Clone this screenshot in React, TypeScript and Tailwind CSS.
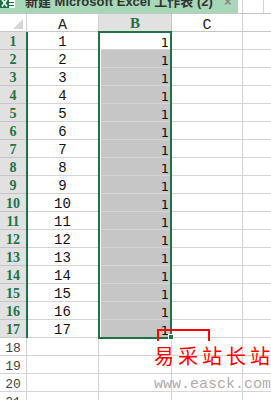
import React from 'react';

const rows = Array.from({ length: 21 }, (_, i) => i + 1);

const mono = { fontFamily: '"Liberation Mono", monospace' };
const serif = { fontFamily: '"Liberation Serif", serif' };

const ExcelIcon: React.FC = () => (
  <svg width="16" height="10" viewBox="0 0 16 10" className="shrink-0">
    <rect x="7" y="0" width="8" height="10" fill="#ffffff" />
    <rect x="9" y="1" width="5" height="1" fill="#217346" />
    <rect x="9" y="4" width="5" height="1" fill="#217346" />
    <rect x="9" y="7" width="5" height="1" fill="#217346" />
    <rect x="0" y="0" width="9" height="10" fill="#1e7145" />
    <path d="M2 1.5 L7 8.5 M7 1.5 L2 8.5" stroke="#ffffff" strokeWidth="1.6" />
  </svg>
);

const App: React.FC = () => {
  return (
    <div className="relative w-[271px] h-[400px] overflow-hidden bg-white">
      {/* title tab */}
      <div className="flex h-[14px] border-b border-[#c6c6c6]">
        <div className="w-[237px] h-[13px] bg-[#a6d8b8] overflow-hidden">
          <div className="flex items-start gap-[9px] -mt-[2px]">
            <ExcelIcon />
            <div
              className="-mt-[3px] text-[13px] leading-[13px] font-bold text-[#333] whitespace-nowrap"
              style={{ fontFamily: '"Liberation Sans", "Noto Sans CJK SC", sans-serif' }}
            >
              新建 Microsoft Excel 工作表 (2) <span className="text-[#666] text-[11px]">ˇ</span>
              <span className="ml-[4px] text-[#888]">×</span>
            </div>
          </div>
        </div>
        <div className="w-[5px] border-l border-[#c6c6c6]" />
        <div className="flex-1 border-l border-[#d4d4d4]" />
        <div className="w-[8px] border-l border-[#d4d4d4]" />
      </div>

      {/* column headers */}
      <div className="flex h-[18px] border-b border-[#c6c6c6]">
        <div className="relative w-[27px] border-r border-[#d4d4d4]">
          <div className="absolute right-[3px] bottom-[2px] w-0 h-0 border-l-[10px] border-l-transparent border-b-[10px] border-b-[#d6d6d6]" />
        </div>
        <div className="w-[72px] border-r border-[#d4d4d4] flex items-start justify-center pt-[4px] text-[15px] leading-[15px] text-[#222]" style={mono}>
          A
        </div>
        <div className="w-[73px] bg-[#e1e1e1] border-r border-[#c6c6c6] flex items-start justify-center pt-[2px] text-[15px] leading-[15px] font-bold text-[#217346]" style={serif}>
          B
        </div>
        <div className="w-[71px] border-r border-[#d4d4d4] flex items-start justify-center pt-[4px] text-[15px] leading-[15px] text-[#222]" style={mono}>
          C
        </div>
        <div className="flex-1" />
      </div>

      {/* rows */}
      {rows.map((r) => {
        const sel = r <= 17;
        return (
          <div key={r} className="flex h-[18px]">
            {sel ? (
              <div className="w-[27px] bg-[#e1e1e1] border-b border-[#c6c6c6] flex items-start justify-center pt-[2px] pr-[1px] text-[14px] leading-[15px] font-bold text-[#217346]" style={serif}>
                {r}
              </div>
            ) : (
              <div className="w-[27px] border-b border-r border-[#d4d4d4] flex items-start justify-center pt-[3px] text-[13px] leading-[15px] text-[#444]" style={mono}>
                {r}
              </div>
            )}
            <div className="w-[72px] border-b border-r border-[#d4d4d4] flex items-start justify-center pt-[3px] text-[14px] leading-[15px] text-[#111]" style={mono}>
              {sel ? r : ''}
            </div>
            {sel ? (
              <div className={`w-[73px] border-r border-[#d4d4d4] ${r === 1 ? 'bg-white border-b border-[#d4d4d4]' : 'bg-[#c6c6c6] border-b border-[#a6a6a6]'}`}>
                <div
                  className="h-full flex items-start justify-end pt-[3px] pr-[2px] text-[13px] leading-[15px] text-[#111]"
                  style={{ fontFamily: '"DejaVu Sans", sans-serif' }}
                >
                  1
                </div>
              </div>
            ) : (
              <div className="w-[73px] border-b border-r border-[#d4d4d4]" />
            )}
            <div className="w-[71px] border-b border-r border-[#d4d4d4]" />
            <div className="flex-1 border-b border-[#d4d4d4]" />
          </div>
        );
      })}

      {/* selection overlay */}
      <div className="absolute left-[26px] top-[32px] w-[2px] h-[306px] bg-[#217346]" />
      <div className="absolute left-[98px] top-[31px] w-[74px] h-[308px] border-2 border-[#217346]">
        <div className="absolute left-0 top-0 bottom-0 w-[1px] bg-white" />
      </div>
      <div className="absolute left-[168px] top-[334px] w-[6px] h-[6px] bg-[#217346] border border-white" />

      {/* watermark */}
      <div className="absolute left-[157px] top-[329px] w-[53px] h-[12px] border-2 border-b-0 border-[#ff0000]" />
      <div
        className="absolute left-[154px] top-[343px] text-[20px] leading-[26px] tracking-[4px] text-[#ff0000] whitespace-nowrap"
        style={{ fontFamily: '"Noto Sans CJK SC", sans-serif' }}
      >
        易采站长站
      </div>
      <div className="absolute left-[154px] top-[377px] text-[15px] leading-[16px] text-[#b5aaaa] whitespace-nowrap" style={mono}>
        www.easck.com
      </div>
    </div>
  );
};

export default App;
